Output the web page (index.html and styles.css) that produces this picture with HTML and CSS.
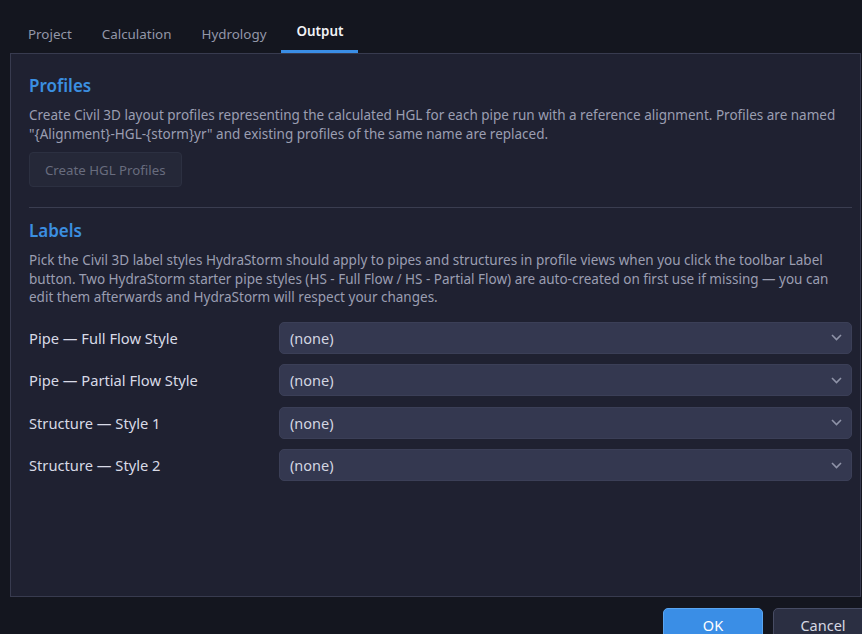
FILE: index.html
```html
<!DOCTYPE html>
<html lang="en">
<head>
  <meta charset="UTF-8">
  <meta name="viewport" content="width=device-width, initial-scale=1.0">
  <title>HydraStorm Settings</title>
  <link rel="stylesheet" href="styles.css">
</head>
<body>

  <nav class="tabs">
    <div class="tab">Project</div>
    <div class="tab">Calculation</div>
    <div class="tab">Hydrology</div>
    <div class="tab active">Output</div>
  </nav>

  <main class="panel">
    <!-- Profiles -->
    <section class="group">
      <h2>Profiles</h2>
      <p>Create Civil 3D layout profiles representing the calculated HGL for each pipe run with a reference alignment. Profiles are named <span class="name">"{Alignment}-HGL-{storm}yr"</span> and existing profiles of the same name are replaced.</p>
      <button class="btn-disabled" disabled>Create HGL Profiles</button>
    </section>

    <hr>

    <!-- Labels -->
    <section class="group">
      <h2>Labels</h2>
      <p>Pick the Civil 3D label styles HydraStorm should apply to pipes and structures in profile views when you click the toolbar Label button. Two HydraStorm starter pipe styles (HS - Full Flow / HS - Partial Flow) are auto-created on first use if missing — you can edit them afterwards and HydraStorm will respect your changes.</p>

      <div class="rows">
        <div class="row">
          <label>Pipe — Full Flow Style</label>
          <div class="select">(none)<svg class="chev" width="11" height="7" viewBox="0 0 11 7"><path d="M1 1l4.5 4.5L10 1" fill="none" stroke="#8f93a8" stroke-width="1.6"/></svg></div>
        </div>
        <div class="row">
          <label>Pipe — Partial Flow Style</label>
          <div class="select">(none)<svg class="chev" width="11" height="7" viewBox="0 0 11 7"><path d="M1 1l4.5 4.5L10 1" fill="none" stroke="#8f93a8" stroke-width="1.6"/></svg></div>
        </div>
        <div class="row">
          <label>Structure — Style 1</label>
          <div class="select">(none)<svg class="chev" width="11" height="7" viewBox="0 0 11 7"><path d="M1 1l4.5 4.5L10 1" fill="none" stroke="#8f93a8" stroke-width="1.6"/></svg></div>
        </div>
        <div class="row">
          <label>Structure — Style 2</label>
          <div class="select">(none)<svg class="chev" width="11" height="7" viewBox="0 0 11 7"><path d="M1 1l4.5 4.5L10 1" fill="none" stroke="#8f93a8" stroke-width="1.6"/></svg></div>
        </div>
      </div>
    </section>
  </main>

  <footer class="actions">
    <button class="btn-ok">OK</button>
    <button class="btn-cancel">Cancel</button>
  </footer>

</body>
</html>
```

FILE: styles.css
```css
html, body { height: 100%; }
body {
  margin: 0;
  background: #14161f;
  font-family: "Noto Sans", "Open Sans", sans-serif;
  color: #d6d8e3;
  overflow: hidden;
}
.tabs {
  display: flex;
  padding-left: 13px;
  height: 53px;
}
.tab {
  padding: 0 15px;
  font-size: 13.4px;
  color: #9397a8;
  display: flex;
  align-items: center;
  padding-top: 14px;
  box-sizing: border-box;
  height: 53px;
}
.tab.active {
  color: #f1f2f6;
  font-weight: 600;
  border-bottom: 3px solid #3a8ee6;
  padding-top: 11px;
}
.panel {
  margin: 0 1px 0 10px;
  height: 544px;
  box-sizing: border-box;
  background: #1f2131;
  border: 1px solid #383b4f;
  padding: 20px 8px 0 18px;
}
.group h2 {
  margin: 0;
  font-size: 17px;
  font-weight: 600;
  color: #3b8fe0;
  line-height: 24px;
}
.group p {
  margin: 8px 0 0;
  font-size: 13.5px;
  line-height: 18.5px;
  color: #9b9eb1;
}
.name { white-space: nowrap; }
.btn-disabled {
  margin-top: 9px;
  height: 35px;
  padding: 0 15px;
  font-family: inherit;
  font-size: 13.25px;
  background: #252838;
  border: 1px solid #2c3041;
  border-radius: 4px;
  color: #686c7e;
}
hr {
  border: 0;
  border-top: 1px solid #3a3d50;
  margin: 20px 0 11px;
}
.rows {
  margin-top: 15px;
  display: flex;
  flex-direction: column;
  gap: 10.6px;
}
.row {
  display: flex;
  align-items: center;
}
.row label {
  width: 250px;
  font-size: 14.7px;
  color: #d8dae6;
}
.select {
  flex: 1;
  height: 32px;
  box-sizing: border-box;
  background: #343850;
  border: 1px solid #3b3f57;
  border-radius: 5px;
  padding: 0 9px 0 10px;
  display: flex;
  align-items: center;
  justify-content: space-between;
  font-size: 14.5px;
  color: #d3d5e1;
}
.actions {
  display: flex;
  justify-content: flex-end;
  gap: 10px;
  padding-top: 11px;
  margin-right: -11px;
}
.actions button {
  width: 100px;
  height: 34px;
  font-family: inherit;
  font-size: 14.5px;
  border-radius: 5px;
}
.btn-ok {
  background: #3a8ee6;
  border: 1px solid #5aa5f0;
  color: #ffffff;
}
.btn-cancel {
  background: #2b2f42;
  border: 1px solid #474c63;
  color: #d6d8e3;
}
```
